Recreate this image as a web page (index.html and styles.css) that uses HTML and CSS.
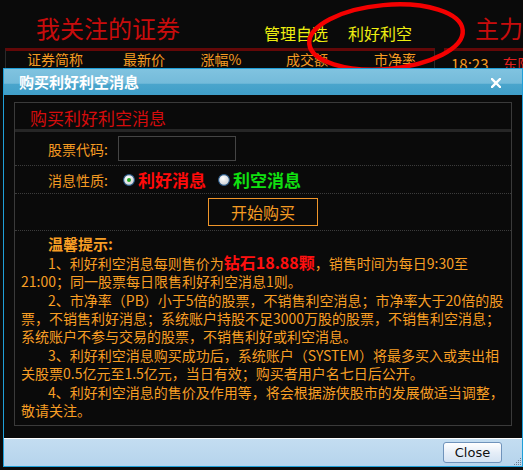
FILE: index.html
```html
<!DOCTYPE html>
<html lang="zh-CN">
<head>
<meta charset="utf-8">
<title>购买利好利空消息</title>
<link rel="stylesheet" href="styles.css">
</head>
<body>
<div class="screen">
  <header class="top">
    <h1 class="brand">我关注的证券</h1>
    <nav class="tabs">
      <span class="tab">管理自选</span>
      <span class="tab">利好利空</span>
    </nav>
    <div class="brand2">主力</div>
  </header>
  <div class="head">
    <div class="cols">
      <span>证券简称</span><span>最新价</span><span>涨幅%</span><span>成交额</span><span>市净率</span>
    </div>
    <div class="side">
      <span class="time">18:23</span><span class="stock">东陌</span>
    </div>
  </div>

  <svg class="mark" width="180" height="76" viewBox="0 0 180 76">
    <ellipse cx="87" cy="37" rx="77" ry="32" transform="rotate(-5 87 37)" fill="none" stroke="#f40000" stroke-width="4.5"/>
  </svg>

  <div class="dialog">
    <div class="titlebar">
      <span class="dtitle">购买利好利空消息</span>
      <svg class="xclose" width="10" height="10" viewBox="0 0 10 10">
        <path d="M1 1L9 9M9 1L1 9" stroke="#fff" stroke-width="2.4" stroke-linecap="square"/>
      </svg>
    </div>
    <div class="dbody">
      <div class="panel">
        <div class="phead">购买利好利空消息</div>
        <div class="row r1">
          <label class="lbl">股票代码:</label>
          <span class="input"></span>
        </div>
        <div class="row r2">
          <span class="lbl">消息性质:</span>
          <span class="radio">
            <svg width="12" height="12" viewBox="0 0 12 12">
              <defs><radialGradient id="rg1" cx="0.4" cy="0.35" r="0.7"><stop offset="0" stop-color="#ffffff"/><stop offset="1" stop-color="#c9cdd2"/></radialGradient></defs>
              <circle cx="6" cy="6" r="5.4" fill="url(#rg1)" stroke="#2a5a88" stroke-width="1.1"/>
              <circle cx="6" cy="6" r="2" fill="#22a322"/>
            </svg>
          </span>
          <span class="opt good">利好消息</span>
          <span class="radio r-off">
            <svg width="12" height="12" viewBox="0 0 12 12">
              <defs><radialGradient id="rg2" cx="0.4" cy="0.35" r="0.7"><stop offset="0" stop-color="#ffffff"/><stop offset="1" stop-color="#c9cdd2"/></radialGradient></defs>
              <circle cx="6" cy="6" r="5.4" fill="url(#rg2)" stroke="#2a5a88" stroke-width="1.1"/>
            </svg>
          </span>
          <span class="opt bad">利空消息</span>
        </div>
        <div class="row r3">
          <button class="buy">开始购买</button>
        </div>
        <div class="tips">
          <p class="tiph">温馨提示:</p>
          <p>1、利好利空消息每则售价为<b class="price">钻石18.88颗</b>，销售时间为每日9:30至21:00；同一股票每日限售利好利空消息1则。</p>
          <p>2、市净率（PB）小于5倍的股票，不销售利空消息；市净率大于20倍的股票，不销售利好消息；系统账户持股不足3000万股的股票，不销售利空消息；系统账户不参与交易的股票，不销售利好或利空消息。</p>
          <p>3、利好利空消息购买成功后，系统账户（SYSTEM）将最多买入或卖出相关股票0.5亿元至1.5亿元，当日有效；购买者用户名七日后公开。</p>
          <p>4、利好利空消息的售价及作用等，将会根据游侠股市的发展做适当调整，敬请关注。</p>
        </div>
      </div>
    </div>
    <div class="dfoot">
      <button class="closebtn">Close</button>
      <svg class="grip" width="9" height="9" viewBox="0 0 9 9">
        <g fill="#6d7f93">
          <rect x="7" y="1" width="1" height="1"/>
          <rect x="5" y="3" width="1" height="1"/><rect x="7" y="3" width="1" height="1"/>
          <rect x="3" y="5" width="1" height="1"/><rect x="5" y="5" width="1" height="1"/><rect x="7" y="5" width="1" height="1"/>
          <rect x="1" y="7" width="1" height="1"/><rect x="3" y="7" width="1" height="1"/><rect x="5" y="7" width="1" height="1"/><rect x="7" y="7" width="1" height="1"/>
        </g>
      </svg>
    </div>
  </div>
</div>
</body>
</html>
```

FILE: styles.css
```css
* { box-sizing: border-box; margin: 0; padding: 0; }
html, body { width: 523px; height: 470px; overflow: hidden; }
body {
  background: #0a0a0a;
  font-family: "Noto Sans CJK SC", "Noto Sans", sans-serif;
}
.screen { position: relative; width: 523px; height: 470px; overflow: hidden; background: #0a0a0a; }

/* page header */
.top { display: flex; align-items: flex-start; height: 48px; padding: 16px 0 0 36px; white-space: nowrap; overflow: hidden; }
.brand { font-size: 24px; line-height: 24px; font-weight: normal; color: #c80c0c; }
.tabs { display: flex; gap: 20px; margin-left: 84px; margin-top: 5px; }
.tab { font-size: 16px; line-height: 24px; color: #eeee10; }
.brand2 { margin-left: 63px; font-size: 24px; line-height: 24px; color: #c80c0c; }

.head { display: flex; height: 20px; }
.cols {
  margin-left: 5px; width: 430px;
  border-top: 3px solid #640808;
  border-left: 1px solid #2a2a2a; border-right: 1px solid #2a2a2a;
  display: grid; grid-template-columns: 98px 80px 74px 98px 78px;
}
.cols span { font-size: 14px; line-height: 17px; color: #f59b22; text-align: center; }
.side { margin-left: 9px; flex: 1; border-top: 3px solid #640808; display: flex; gap: 14px; padding: 4px 0 0 7px; white-space: nowrap; overflow: hidden; }
.time { font-size: 15px; line-height: 17px; color: #f59b22; }
.stock { font-size: 15px; line-height: 17px; color: #e02020; }

/* annotation */
.mark { position: absolute; left: 299px; top: 0; }

/* dialog */
.dialog {
  position: absolute; left: 3px; top: 68px; width: 520px; height: 399px;
  border: 1px solid #1f9fd8;
  display: flex; flex-direction: column;
  background: #0a0a0a;
}
.titlebar {
  height: 26px; flex: none;
  display: flex; align-items: center; justify-content: space-between;
  padding: 0 21px 0 15px;
  background: linear-gradient(#80c3e0 0%, #74bbda 55%, #4aa5cc 58%, #3f9ec8 100%);
}
.dtitle { font-size: 15px; font-weight: bold; color: #fff; line-height: 18px; }
.xclose { display: block; margin-top: 2px; }

.dbody { flex: 1; padding: 7px 10px 12px 10px; background: #0a0a0a; }
.panel { height: 100%; border: 1px solid #3a3a3a; }
.phead { height: 29px; line-height: 29px; padding-left: 15px; font-size: 17px; color: #d40c0c; border-bottom: 3px solid #262626; }

.row { display: flex; align-items: center; padding-left: 33px; border-bottom: 1px dotted #3c3c3c; }
.r1 { height: 34px; }
.r2 { height: 28px; }
.r3 { height: 37px; padding-left: 193px; }
.lbl { width: 70px; font-size: 14px; line-height: 18px; color: #f59b22; }
.input { width: 118px; height: 25px; border: 1px solid #444; background: #0a0a0a; }
.radio { display: flex; margin-left: 5px; width: 12px; height: 12px; }
.radio svg { display: block; }
.r-off { margin-left: 12px; }
.opt { margin-left: 3px; font-size: 17px; line-height: 20px; font-weight: bold; }
.good { color: #ff0a0a; }
.bad { color: #10e010; }
.buy {
  width: 110px; height: 28px; border: 1px solid #f0962a; background: #0a0a0a;
  color: #f59b22; font-family: inherit; font-size: 16px; line-height: 20px;
}

.tips { padding: 4px 7px 0 6px; color: #f79e24; font-size: 14px; line-height: 18px; }
.tips p { text-indent: 27px; margin-bottom: 1px; }
.tiph { font-weight: bold; font-size: 15px; margin-bottom: 0 !important; }
.price { color: #ff1010; font-size: 16px; }

.dfoot {
  position: relative;
  height: 28px; flex: none;
  border-top: 1px solid #ffffff;
  background: linear-gradient(#c3ddf1, #b6d4ec);
  display: flex; align-items: center; justify-content: flex-end;
  padding-right: 20px;
}
.closebtn {
  width: 59px; height: 21px;
  border: 1px solid #6f93bb; border-radius: 3px;
  background: linear-gradient(#ffffff, #e6eef8 50%, #d4e3f3);
  font-family: "DejaVu Sans", sans-serif; font-size: 13px; color: #111;
}
.grip { position: absolute; right: 0; bottom: 0; }
```
